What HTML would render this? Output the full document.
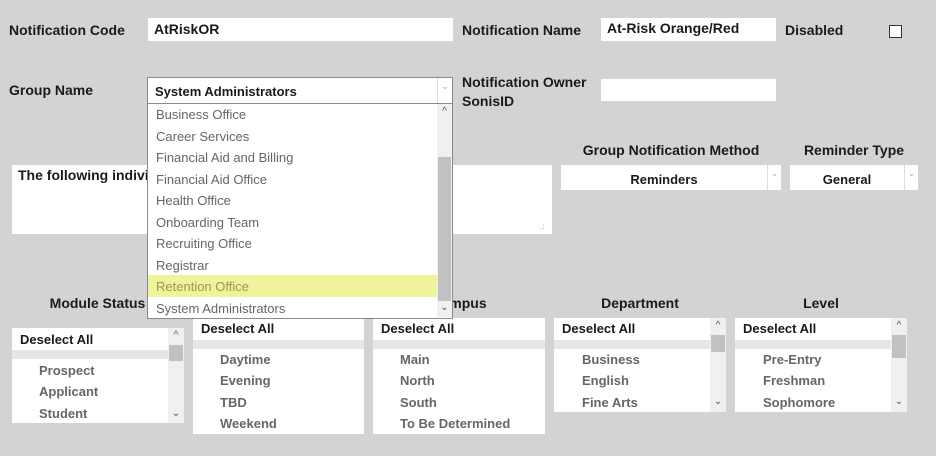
<!DOCTYPE html>
<html><head><style>
body{margin:0;width:936px;height:456px;background:#d3d3d3;font-family:"Liberation Sans",sans-serif;position:relative;overflow:hidden;color:#1a1a1a}
.a{position:absolute}
.lbl{font-weight:bold;font-size:14px;white-space:nowrap}
.inp{background:#fff}
.lb{background:#fff}
.dl{font-weight:bold;font-size:13px;position:absolute;left:8px}
.band{position:absolute;left:0;height:9px;background:#e6e6e6}
.it{position:absolute;font-weight:bold;font-size:13px;color:#666}
.sb{position:absolute;top:0;bottom:0;width:16px;background:#f0f0f0}
.th{position:absolute;left:1px;width:14px;background:#c1c1c1}
.ar{position:absolute;left:0;width:16px;text-align:center;font-size:10px;color:#555}
.opt{position:absolute;left:8px;font-size:13px;color:#666}
</style></head><body>
<div class="a lbl" style="left:9px;top:22px">Notification Code</div>
<div class="a inp" style="left:148px;top:18px;width:305px;height:23px"></div>
<div class="a" style="left:154px;top:21px;font-size:14px;font-weight:bold">AtRiskOR</div>
<div class="a lbl" style="left:462px;top:22px">Notification Name</div>
<div class="a inp" style="left:601px;top:18px;width:175px;height:23px"></div>
<div class="a" style="left:607px;top:20px;font-size:14px;font-weight:bold">At-Risk Orange/Red</div>
<div class="a lbl" style="left:785px;top:22px">Disabled</div>
<div class="a" style="left:889px;top:25px;width:11px;height:11px;border:1px solid #333;background:#fff"></div>

<div class="a lbl" style="left:9px;top:82px">Group Name</div>
<div class="a lbl" style="left:462px;top:73px;line-height:19px">Notification Owner<br>SonisID</div>
<div class="a inp" style="left:601px;top:79px;width:175px;height:22px"></div>

<div class="a inp" style="left:12px;top:165px;width:540px;height:69px"></div>
<div class="a" style="left:18px;top:167px;font-size:14px;font-weight:bold">The following individ</div>
<div class="a" style="left:540px;top:222px;font-size:8px;color:#999">.:</div>

<div class="a lbl" style="left:561px;top:142px;width:220px;text-align:center">Group Notification Method</div>
<div class="a inp" style="left:561px;top:165px;width:220px;height:25px"></div>
<div class="a" style="left:767px;top:165px;width:1px;height:25px;background:#ddd"></div>
<div class="a" style="left:561px;top:172px;width:206px;text-align:center;font-weight:bold;font-size:13px">Reminders</div>
<div class="a" style="left:768px;top:168px;width:13px;text-align:center;font-size:9px;color:#aaa">⌄</div>
<div class="a lbl" style="left:790px;top:142px;width:128px;text-align:center">Reminder Type</div>
<div class="a inp" style="left:790px;top:165px;width:128px;height:25px"></div>
<div class="a" style="left:904px;top:165px;width:1px;height:25px;background:#ddd"></div>
<div class="a" style="left:790px;top:172px;width:114px;text-align:center;font-weight:bold;font-size:13px">General</div>
<div class="a" style="left:905px;top:168px;width:13px;text-align:center;font-size:9px;color:#aaa">⌄</div>

<div class="a lbl" style="left:12px;top:295px;width:171px;text-align:center">Module Status</div>
<div class="a lbl" style="left:373px;top:295px;width:172px;text-align:center">Campus</div>
<div class="a lbl" style="left:554px;top:295px;width:172px;text-align:center">Department</div>
<div class="a lbl" style="left:735px;top:295px;width:172px;text-align:center">Level</div>

<div class="a lb" style="left:12px;top:328px;width:171px;height:95px">
 <div class="dl" style="top:4px">Deselect All</div><div class="band" style="top:22px;width:156px"></div>
 <div class="it" style="left:27px;top:35px">Prospect</div><div class="it" style="left:27px;top:56px">Applicant</div><div class="it" style="left:27px;top:78px">Student</div>
 <div class="sb" style="left:156px"><div class="ar" style="top:2px">^</div><div class="th" style="top:17px;height:16px"></div><div class="ar" style="top:80px">⌄</div></div>
</div>
<div class="a lb" style="left:193px;top:318px;width:171px;height:116px">
 <div class="dl" style="top:3px">Deselect All</div><div class="band" style="top:22px;width:171px"></div>
 <div class="it" style="left:27px;top:34px">Daytime</div><div class="it" style="left:27px;top:55px">Evening</div><div class="it" style="left:27px;top:77px">TBD</div><div class="it" style="left:27px;top:98px">Weekend</div>
</div>
<div class="a lb" style="left:373px;top:318px;width:172px;height:116px">
 <div class="dl" style="top:3px">Deselect All</div><div class="band" style="top:22px;width:172px"></div>
 <div class="it" style="left:27px;top:34px">Main</div><div class="it" style="left:27px;top:55px">North</div><div class="it" style="left:27px;top:77px">South</div><div class="it" style="left:27px;top:98px">To Be Determined</div>
</div>
<div class="a lb" style="left:554px;top:318px;width:172px;height:94px">
 <div class="dl" style="top:3px">Deselect All</div><div class="band" style="top:22px;width:156px"></div>
 <div class="it" style="left:28px;top:34px">Business</div><div class="it" style="left:28px;top:55px">English</div><div class="it" style="left:28px;top:77px">Fine Arts</div>
 <div class="sb" style="left:156px"><div class="ar" style="top:2px">^</div><div class="th" style="top:17px;height:17px"></div><div class="ar" style="top:78px">⌄</div></div>
</div>
<div class="a lb" style="left:735px;top:318px;width:172px;height:94px">
 <div class="dl" style="top:3px">Deselect All</div><div class="band" style="top:22px;width:156px"></div>
 <div class="it" style="left:28px;top:34px">Pre-Entry</div><div class="it" style="left:28px;top:55px">Freshman</div><div class="it" style="left:28px;top:77px">Sophomore</div>
 <div class="sb" style="left:156px"><div class="ar" style="top:2px">^</div><div class="th" style="top:17px;height:23px"></div><div class="ar" style="top:78px">⌄</div></div>
</div>

<!-- dropdown -->
<div class="a" style="left:147px;top:77px;width:304px;height:240px;border:1px solid #8a8a8a;background:#fff"></div>
<div class="a" style="left:148px;top:103px;width:304px;height:1px;background:#8a8a8a"></div>
<div class="a" style="left:155px;top:84px;font-weight:bold;font-size:13px">System Administrators</div>
<div class="a" style="left:437px;top:78px;width:1px;height:25px;background:#ddd"></div>
<div class="a" style="left:438px;top:81px;width:14px;text-align:center;font-size:9px;color:#aaa">⌄</div>
<div class="a" style="left:148px;top:104px;width:304px;height:213px">
 <div class="a" style="left:0;top:171px;width:289px;height:22px;background:#eef39c"></div>
 <div class="opt" style="top:3px">Business Office</div>
 <div class="opt" style="top:25px">Career Services</div>
 <div class="opt" style="top:46px">Financial Aid and Billing</div>
 <div class="opt" style="top:68px">Financial Aid Office</div>
 <div class="opt" style="top:89px">Health Office</div>
 <div class="opt" style="top:111px">Onboarding Team</div>
 <div class="opt" style="top:132px">Recruiting Office</div>
 <div class="opt" style="top:154px">Registrar</div>
 <div class="opt" style="top:175px;color:#9a9a50">Retention Office</div>
 <div class="opt" style="top:197px">System Administrators</div>
 <div class="sb" style="left:289px;width:15px"><div class="ar" style="top:2px;width:15px">^</div><div class="th" style="top:53px;height:144px;width:13px"></div><div class="ar" style="top:198px;width:15px">⌄</div></div>
</div>
</body></html>
